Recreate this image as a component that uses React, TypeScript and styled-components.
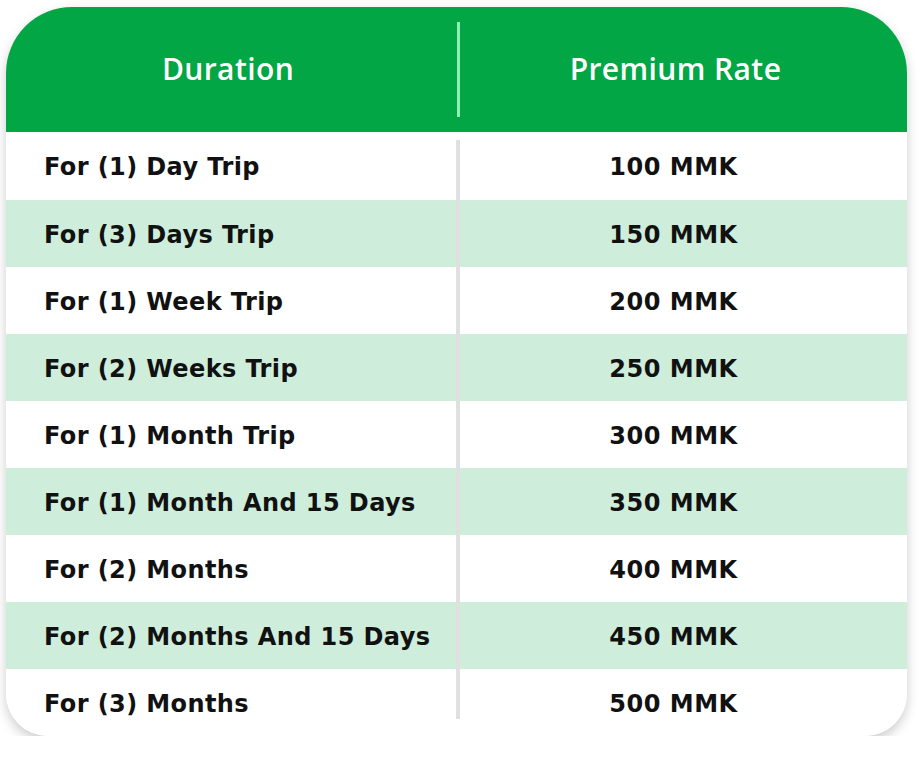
import React from "react";
import styled, { createGlobalStyle } from "styled-components";

const Global = createGlobalStyle`
  html, body { margin: 0; padding: 0; background: #ffffff; }
  body { font-family: "DejaVu Sans", "Open Sans", sans-serif; }
`;

const Card = styled.div`
  margin: 7px 0 0 6px;
  width: 901px;
  background: #ffffff;
  border-radius: 66px 66px 42px 42px;
  box-shadow: 0 5px 12px rgba(0, 0, 0, 0.2);
  overflow: hidden;
`;

const Header = styled.div`
  height: 125px;
  background: #02a645;
  display: grid;
  grid-template-columns: 450px 4px 1fr;
  align-items: center;
`;

const HeadCell = styled.div<{ $shift?: number }>`
  color: #ffffff;
  font-family: "Open Sans", "DejaVu Sans", sans-serif;
  font-size: 30px;
  font-weight: 600;
  text-align: center;
  letter-spacing: 0.4px;
  transform: translateX(${(p) => p.$shift ?? 0}px);
  padding-bottom: 2px;
`;

const HeadDivider = styled.div`
  width: 3px;
  margin-left: 1px;
  height: 95px;
  background: #8ff0b5;
`;

const Body = styled.div`
  position: relative;
  &::before {
    content: "";
    position: absolute;
    left: 450px;
    top: 8px;
    bottom: 17px;
    width: 4px;
    background: #e0e0e0;
  }
`;

const Row = styled.div<{ $alt: boolean }>`
  height: 67px;
  display: grid;
  grid-template-columns: 450px 4px 1fr;
  align-items: center;
  background: ${(p) => (p.$alt ? "#ceeedb" : "#ffffff")};
  &:first-child {
    height: 68px;
  }
`;

const Label = styled.div`
  padding-left: 38px;
  padding-top: 2px;
  font-family: "DejaVu Sans", sans-serif;
  font-size: 24px;
  font-weight: 700;
  color: #111111;
  letter-spacing: 0.4px;
`;

const Value = styled.div`
  grid-column: 3;
  padding-top: 2px;
  text-align: center;
  font-family: "DejaVu Sans", sans-serif;
  font-size: 24px;
  font-weight: 700;
  color: #111111;
  letter-spacing: 0.5px;
  transform: translateX(-10px);
`;

const rows = [
  ["For (1) Day Trip", "100 MMK"],
  ["For (3) Days Trip", "150 MMK"],
  ["For (1) Week Trip", "200 MMK"],
  ["For (2) Weeks Trip", "250 MMK"],
  ["For (1) Month Trip", "300 MMK"],
  ["For (1) Month And 15 Days", "350 MMK"],
  ["For (2) Months", "400 MMK"],
  ["For (2) Months And 15 Days", "450 MMK"],
  ["For (3) Months", "500 MMK"],
];

export default function App() {
  return (
    <>
      <Global />
      <Card>
        <Header>
          <HeadCell $shift={-3}>Duration</HeadCell>
          <HeadDivider />
          <HeadCell $shift={-8}>Premium Rate</HeadCell>
        </Header>
        <Body>
          {rows.map(([d, r], i) => (
            <Row key={d} $alt={i % 2 === 1}>
              <Label>{d}</Label>
              <Value>{r}</Value>
            </Row>
          ))}
        </Body>
      </Card>
    </>
  );
}
